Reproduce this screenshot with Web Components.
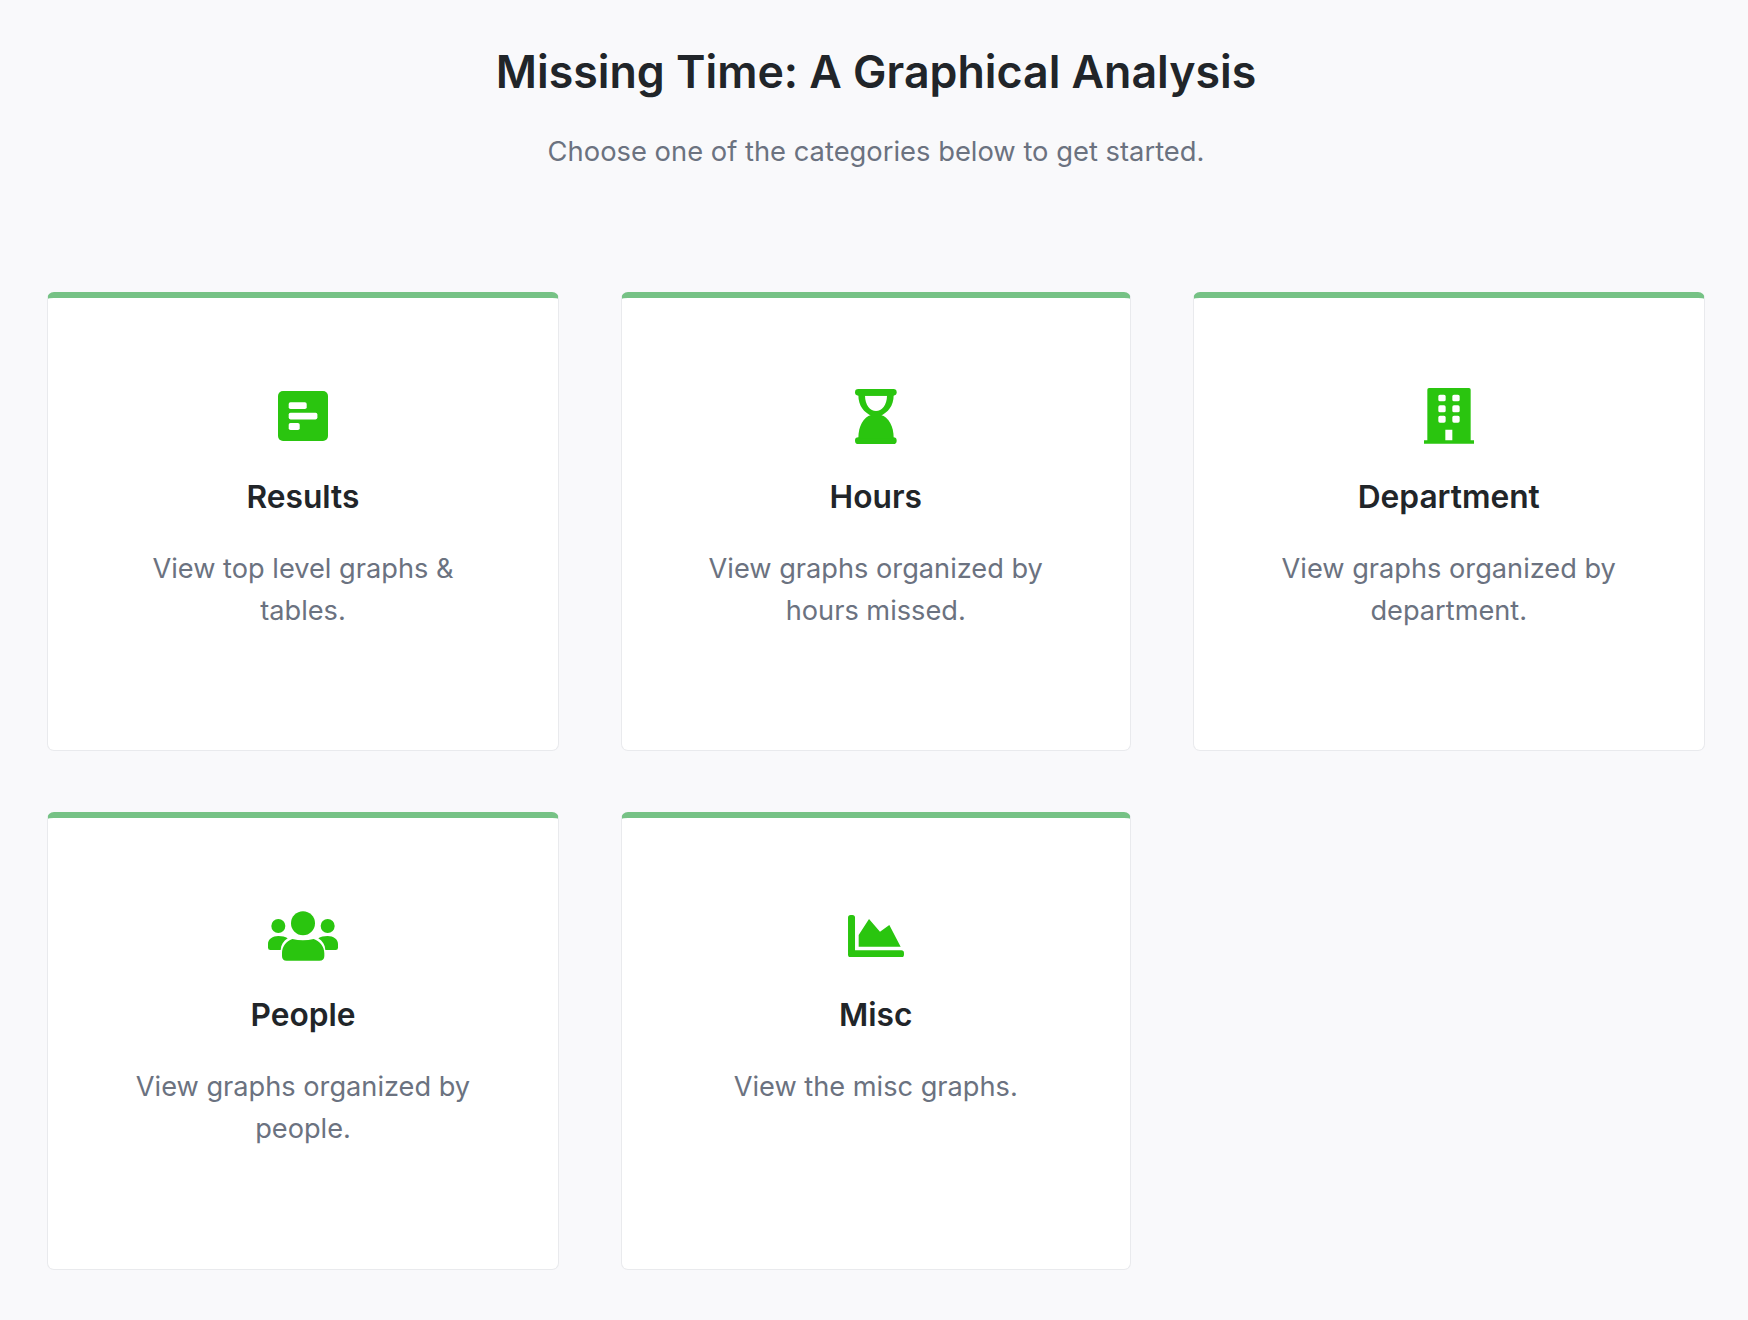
<!DOCTYPE html>
<html lang="en">
<head>
<meta charset="utf-8">
<title>Missing Time</title>
<style>
  html, body { margin: 0; background: #f9f9fb; }
  body { font-family: Inter, "Liberation Sans", sans-serif; }
  /* second row sits a touch tighter than the first */
  .row-two { --card-height: 458px; --title-gap: 29px; }
</style>
</head>
<body>
<analysis-page>
  <page-header slot="header" heading="Missing Time: A Graphical Analysis">Choose one of the categories below to get started.</page-header>

  <category-card heading="Results">
    <svg slot="icon" width="50" height="50" viewBox="0 0 50 50">
      <rect width="50" height="50" rx="5"/>
      <g fill="#fff">
        <rect x="10.7" y="11.3" width="18" height="6.7" rx="1.8"/>
        <rect x="10.7" y="21.7" width="28.7" height="6.7" rx="1.8"/>
        <rect x="10.7" y="32" width="11" height="7" rx="1.8"/>
      </g>
    </svg>
    View top level graphs &amp; tables.
  </category-card>

  <category-card heading="Hours">
    <svg slot="icon" width="41.7" height="55" viewBox="72 40 125 165">
      <rect x="72" y="40" width="125" height="20" rx="10"/>
      <rect x="72" y="185" width="125" height="20" rx="10"/>
      <path fill-rule="evenodd" d="M82 58C82 92 100 110 120 120H150C170 110 188 92 188 58ZM102 60H168C168 88 152 106 135 106C118 106 102 88 102 60Z"/>
      <path d="M120 118C98 124 82 150 82 188H188C188 150 172 124 150 118Z"/>
    </svg>
    View graphs organized by hours missed.
  </category-card>

  <category-card heading="Department">
    <svg slot="icon" width="50" height="55.7" viewBox="57 40 150 167">
      <path fill-rule="evenodd" d="M72 40H192a5 5 0 0 1 5 5V197H207V207H57V197H67V45a5 5 0 0 1 5-5ZM105 60a5 5 0 0 0-5 5V75a5 5 0 0 0 5 5H117a5 5 0 0 0 5-5V65a5 5 0 0 0-5-5ZM147 60a5 5 0 0 0-5 5V75a5 5 0 0 0 5 5H159a5 5 0 0 0 5-5V65a5 5 0 0 0-5-5ZM105 92a5 5 0 0 0-5 5V108a5 5 0 0 0 5 5H117a5 5 0 0 0 5-5V97a5 5 0 0 0-5-5ZM147 92a5 5 0 0 0-5 5V108a5 5 0 0 0 5 5H159a5 5 0 0 0 5-5V97a5 5 0 0 0-5-5ZM105 123a5 5 0 0 0-5 5V139a5 5 0 0 0 5 5H117a5 5 0 0 0 5-5V128a5 5 0 0 0-5-5ZM147 123a5 5 0 0 0-5 5V139a5 5 0 0 0 5 5H159a5 5 0 0 0 5-5V128a5 5 0 0 0-5-5ZM121 165V197H142V165Z"/>
    </svg>
    View graphs organized by department.
  </category-card>

  <category-card class="row-two" heading="People">
    <svg slot="icon" width="70" height="49.7" viewBox="24 48 210 149">
      <circle cx="129" cy="85" r="36"/>
      <circle cx="55" cy="93" r="21"/>
      <circle cx="203" cy="93" r="21"/>
      <path d="M24 158V147C24 132 38 123 55 123C66 123 76 125 83 130C70 138 63 150 62 165H31Q24 165 24 158Z"/>
      <path d="M234 158V147C234 132 220 123 203 123C192 123 182 125 175 130C188 138 195 150 196 165H227Q234 165 234 158Z"/>
      <path d="M97 132Q129 140 161 132C180 138 193 155 193 175V183Q193 197 178 197H80Q66 197 66 183V175C66 155 78 138 97 132Z"/>
    </svg>
    View graphs organized by people.
  </category-card>

  <category-card class="row-two" heading="Misc">
    <svg slot="icon" width="56" height="42.3" viewBox="54 60 168 127">
      <path d="M54 68Q54 60 62 60H67Q75 60 75 68V166H214Q222 166 222 174V179Q222 187 214 187H62Q54 187 54 179Z"/>
      <path d="M86 155V120L117 72L150 110L178 90L212 155Z"/>
    </svg>
    View the misc graphs.
  </category-card>
</analysis-page>

<script>
// page shell: header on top, then the grid of cards
class AnalysisPage extends HTMLElement {
  constructor() {
    super();
    this.attachShadow({ mode: 'open' });
    this.shadowRoot.innerHTML = `
      <style>
        :host { display: block; padding: 0 43px 50px 47px; color: #212529; }
        .grid {
          display: grid;
          grid-template-columns: 512px 509.5px 512.5px;
          column-gap: 62px;
          row-gap: 61px;
          align-items: start;
        }
      </style>
      <slot name="header"></slot>
      <div class="grid"><slot></slot></div>
    `;
  }
}

class PageHeader extends HTMLElement {
  constructor() {
    super();
    this.attachShadow({ mode: 'open' });
    this.shadowRoot.innerHTML = `
      <style>
        :host { display: block; text-align: center; padding: 41px 0 122px; }
        h1 { margin: 0 0 31px; font-size: 44.7px; line-height: 62px; font-weight: 600; color: #212529; }
        p { margin: 0; font-size: 27.35px; line-height: 36px; color: #6b7280; }
      </style>
      <h1></h1>
      <p><slot></slot></p>
    `;
  }

  connectedCallback() {
    this.shadowRoot.querySelector('h1').textContent = this.getAttribute('heading');
  }
}

class CategoryCard extends HTMLElement {
  constructor() {
    super();
    this.attachShadow({ mode: 'open' });
    this.shadowRoot.innerHTML = `
      <style>
        :host {
          display: block;
          box-sizing: border-box;
          height: var(--card-height, 459px);
          padding: 90px 70px 0;
          background: #fff;
          border: 1px solid #e9eaed;
          border-top: 6px solid #76c285;
          border-radius: 7px;
          text-align: center;
        }
        .icon { display: flex; align-items: center; justify-content: center; height: 56px; }
        ::slotted(svg) { display: block; fill: #2ac50f; }
        h2 { margin: var(--title-gap, 31px) 0 29px; font-size: 31.7px; line-height: 44px; font-weight: 600; color: #212529; }
        p { margin: 0; font-size: 27.2px; line-height: 42px; color: #6b7280; }
      </style>
      <div class="icon"><slot name="icon"></slot></div>
      <h2></h2>
      <p><slot></slot></p>
    `;
  }

  connectedCallback() {
    this.shadowRoot.querySelector('h2').textContent = this.getAttribute('heading');
  }
}

customElements.define('analysis-page', AnalysisPage);
customElements.define('page-header', PageHeader);
customElements.define('category-card', CategoryCard);
</script>
</body>
</html>
